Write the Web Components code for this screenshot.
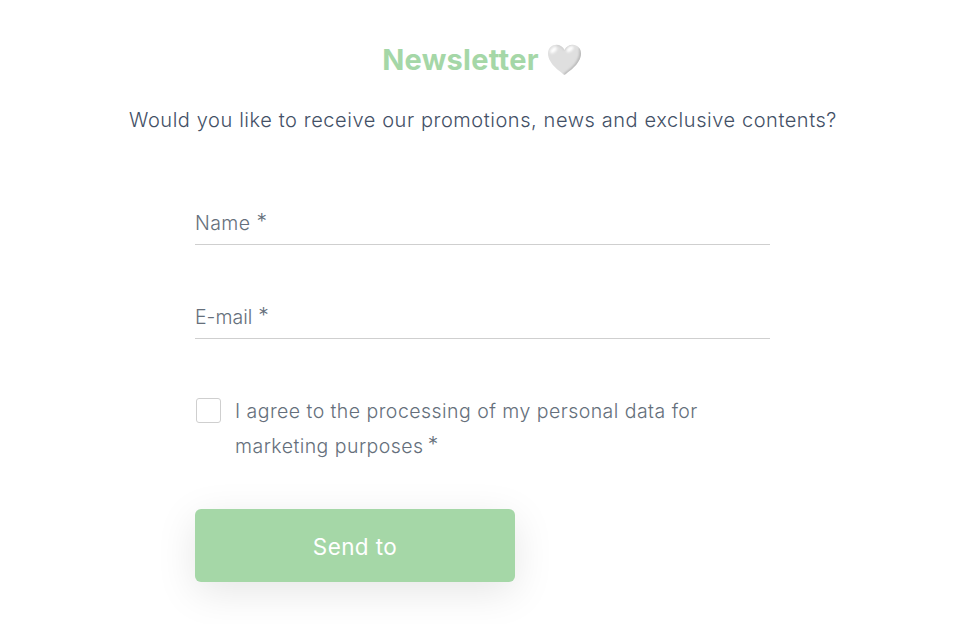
<!DOCTYPE html>
<html lang="en">
<head>
<meta charset="utf-8">
<title>Newsletter</title>
<style>
  body {
    margin: 0;
    background: #fff;
    font-family: Inter, 'Open Sans', sans-serif;
    --green: #a5d7a7;
    --text: #435066;
    --muted: #656f7b;
    --line: #cfcfcf;
  }
</style>
</head>
<body>
<newsletter-section>
  <span slot="title">Newsletter</span>
  <heart-icon slot="title"></heart-icon>
  <span slot="intro">Would you like to receive our promotions, news and exclusive contents?</span>
  <form-field required style="letter-spacing: 0.4px">Name</form-field>
  <form-field required>E-mail</form-field>
  <consent-check><span>I agree to the processing of my personal data for</span> <span>marketing purposes</span></consent-check>
  <send-button>Send to</send-button>
</newsletter-section>
<script>
class NewsletterSection extends HTMLElement {
  connectedCallback() {
    this.attachShadow({ mode: 'open' });
    this.shadowRoot.innerHTML = `
      <style>
        :host {
          display: block;
          height: 624px;
          box-sizing: border-box;
          padding: 39px 0 0 7px;
          overflow: hidden;
        }
        h2 {
          display: flex;
          justify-content: center;
          align-items: center;
          gap: 8px;
          height: 40px;
          margin: 0;
          padding-right: 1px;
          color: var(--green);
          font-size: 29px;
          font-weight: 700;
          letter-spacing: 0.25px;
        }
        p {
          margin: 21px 0 0;
          padding-left: 1px;
          line-height: 40px;
          text-align: center;
          white-space: nowrap;
          color: var(--text);
          font-size: 20px;
          font-weight: 350;
          letter-spacing: 0.54px;
          word-spacing: 0.2px;
        }
        form {
          display: flex;
          flex-direction: column;
          width: 575px;
          margin: 60px auto 0;
        }
      </style>
      <h2><slot name="title"></slot></h2>
      <p><slot name="intro"></slot></p>
      <form><slot></slot></form>
    `;
  }
}

class HeartIcon extends HTMLElement {
  connectedCallback() {
    this.attachShadow({ mode: 'open' });
    this.shadowRoot.innerHTML = `
      <style>
        :host { display: block; width: 35px; height: 32px; padding-top: 2px; }
        svg { display: block; }
      </style>
      <svg width="35" height="32" viewBox="0 0 35 32">
        <defs>
          <filter id="soft" x="-50%" y="-50%" width="200%" height="200%"><feGaussianBlur stdDeviation=".8"/></filter>
          <clipPath id="shape"><path d="M17.500 31C14 28 1 20 1 9.500C1 4 5 .7 9.400.7C13 .7 16 2.700 17.500 6C19 2.700 22 .7 25.800.7C30.500.7 34 4.500 34 9.500C34 20 21 28 17.500 31Z"/></clipPath>
        </defs>
        <g clip-path="url(#shape)">
          <rect width="35" height="32" fill="#dfdfdf"/>
          <path d="M33.500 3C36 15 29 23 17.500 31" fill="none" stroke="#b5b5b5" stroke-width="3" filter="url(#soft)"/>
          <path d="M17.500 6C19 2.700 22 .7 25.800.7M17.500 6C16 2.700 13 .7 9.400.7" fill="none" stroke="#c6c6c6" stroke-width="1.500" filter="url(#soft)"/>
          <ellipse cx="6.500" cy="6" rx="4" ry="2.300" transform="rotate(-42 6.500 6)" fill="#fff" filter="url(#soft)"/>
          <ellipse cx="23" cy="5" rx="4" ry="2.200" transform="rotate(-38 23 5)" fill="#fff" filter="url(#soft)"/>
        </g>
      </svg>
    `;
  }
}

class FormField extends HTMLElement {
  connectedCallback() {
    this.attachShadow({ mode: 'open' });
    this.shadowRoot.innerHTML = `
      <style>
        :host {
          display: flex;
          align-items: flex-end;
          box-sizing: border-box;
          height: 45px;
          margin-bottom: 49px;
          padding-bottom: 3px;
          border-bottom: 1px solid var(--line);
          color: var(--muted);
          font-size: 19.5px;
          font-weight: 350;
          line-height: 35px;
        }
        sup { font-size: 21px; line-height: 35px; margin-left: 6px; padding-bottom: 2px; }
      </style>
      <slot></slot>${this.hasAttribute('required') ? '<sup>*</sup>' : ''}
    `;
  }
}

class ConsentCheck extends HTMLElement {
  connectedCallback() {
    this.attachShadow({ mode: 'open' });
    this.shadowRoot.innerHTML = `
      <style>
        :host {
          display: flex;
          gap: 14px;
          height: 81px;
          padding-left: 1px;
          color: var(--muted);
          font-size: 19.5px;
          font-weight: 350;
          line-height: 35px;
          letter-spacing: 0.46px;
        }
        i {
          flex: none;
          box-sizing: border-box;
          width: 25px;
          height: 25px;
          margin-top: 10px;
          border: 1px solid var(--line);
          border-radius: 3px;
        }
        label { width: 480px; padding-top: 6px; }
        sup { margin-left: 4px; font-size: 21px; line-height: 0; vertical-align: 1px; }
      </style>
      <i></i>
      <label><slot></slot><sup>*</sup></label>
    `;
  }
}

class SendButton extends HTMLElement {
  connectedCallback() {
    this.attachShadow({ mode: 'open' });
    this.shadowRoot.innerHTML = `
      <style>
        :host { display: block; margin-top: 40px; }
        button {
          display: block;
          width: 320px;
          height: 73px;
          padding: 1px 0 0;
          border: 0;
          border-radius: 6px;
          background: var(--green);
          box-shadow: 0 10px 40px rgba(0, 0, 0, 0.1);
          color: #fff;
          font: 400 22.5px Inter, sans-serif;
          letter-spacing: 0.4px;
        }
      </style>
      <button type="button"><slot></slot></button>
    `;
  }
}

customElements.define('newsletter-section', NewsletterSection);
customElements.define('heart-icon', HeartIcon);
customElements.define('form-field', FormField);
customElements.define('consent-check', ConsentCheck);
customElements.define('send-button', SendButton);
</script>
</body>
</html>
